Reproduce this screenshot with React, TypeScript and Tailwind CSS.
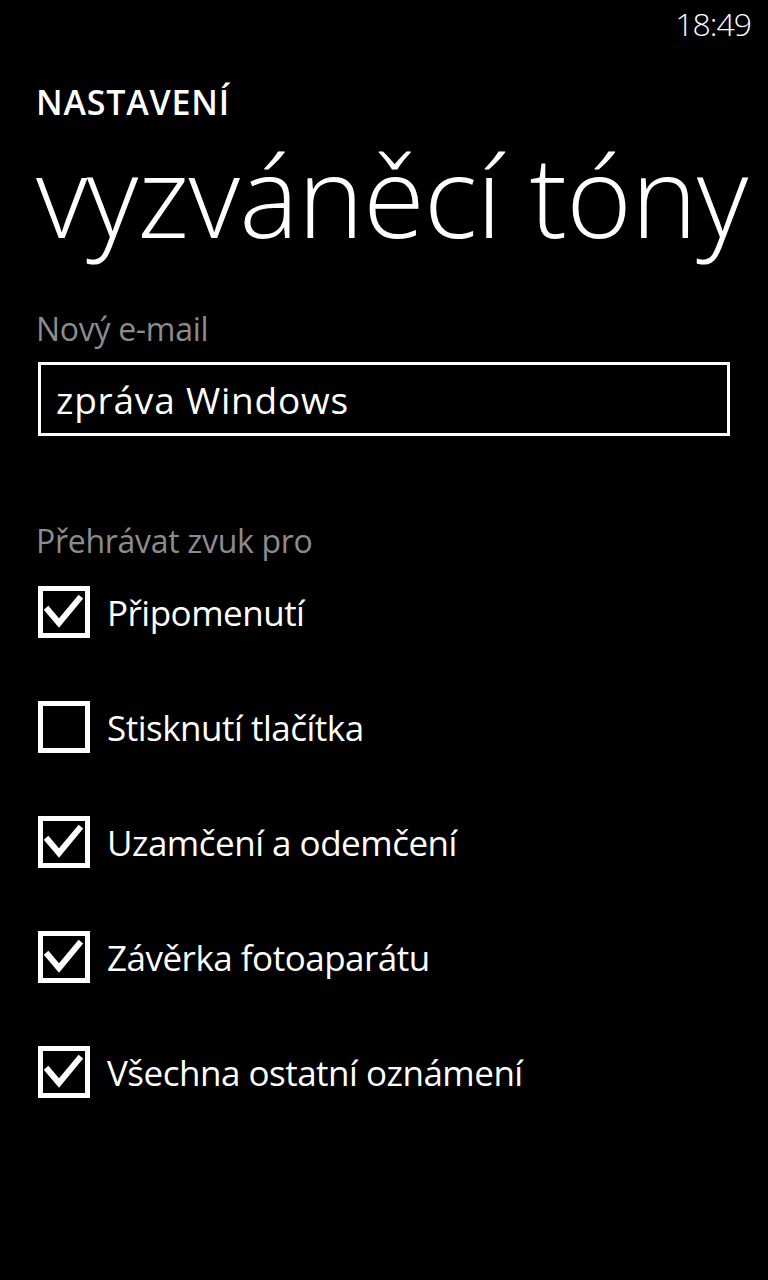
import React from 'react'

const items = [
  { label: 'Připomenutí', checked: true },
  { label: 'Stisknutí tlačítka', checked: false },
  { label: 'Uzamčení a odemčení', checked: true },
  { label: 'Závěrka fotoaparátu', checked: true },
  { label: 'Všechna ostatní oznámení', checked: true },
]

function CheckBox({ checked }: { checked: boolean }) {
  return (
    <div className="w-[52px] h-[52px] border-[5px] border-white shrink-0 flex items-center justify-center">
      {checked && (
        <svg width="42" height="42" viewBox="0 0 42 42">
          <path d="M5 19 L16 32 L36 8" fill="none" stroke="white" strokeWidth="6" strokeLinecap="square" />
        </svg>
      )}
    </div>
  )
}

export default function App() {
  return (
    <div className="w-[768px] h-[1280px] bg-black text-white font-['Open_Sans',sans-serif] flex flex-col">
      {/* status bar */}
      <div className="h-[48px] flex justify-end items-center pr-[17px]">
        <span className="text-[32px] font-light leading-none tracking-[-1px]">18:49</span>
      </div>

      <div className="pl-[36px] flex flex-col">
        <h2 className="mt-[37px] text-[34px] font-semibold leading-none tracking-[0.8px]">NASTAVENÍ</h2>
        <h1 className="mt-[20px] text-[112px] font-light leading-none tracking-[-0.7px] whitespace-nowrap">vyzváněcí tóny</h1>

        <div className="mt-[62px] text-[32px] leading-none text-[#8c8c8c] tracking-[-0.3px]">Nový e-mail</div>
        <div className="mt-[17px] ml-[2px] w-[692px] h-[74px] border-[3px] border-white flex items-center pl-[15px]">
          <span className="text-[37px] leading-none tracking-[0.8px]">zpráva Windows</span>
        </div>

        <div className="mt-[89px] text-[32px] leading-none text-[#8c8c8c] tracking-[-0.3px]">Přehrávat zvuk pro</div>

        <div className="mt-[29px] flex flex-col gap-[63px]">
          {items.map((it) => (
            <div key={it.label} className="flex items-center gap-[17px] pl-[2px]">
              <CheckBox checked={it.checked} />
              <span className="text-[35px] leading-none tracking-[-0.5px]">{it.label}</span>
            </div>
          ))}
        </div>
      </div>
    </div>
  )
}
